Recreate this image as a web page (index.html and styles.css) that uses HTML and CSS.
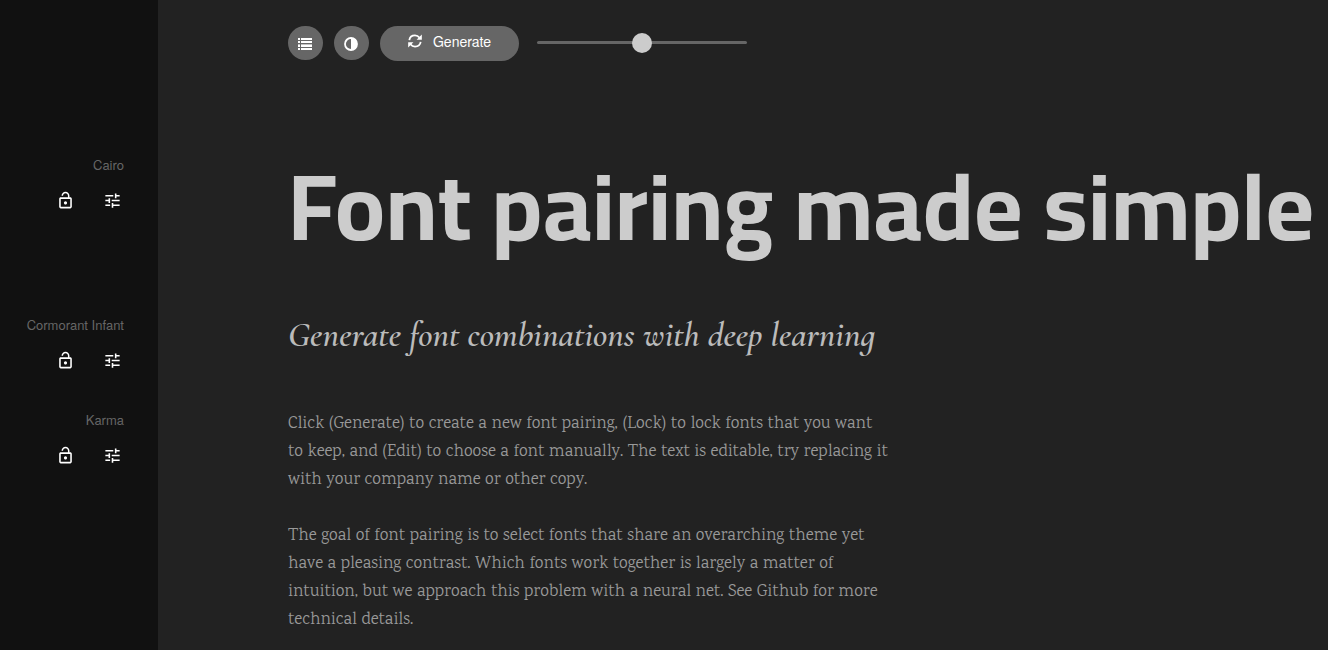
FILE: index.html
```html
<!DOCTYPE html>
<html lang="en">
<head>
<meta charset="utf-8">
<meta name="viewport" content="width=device-width, initial-scale=1">
<title>Font pairing made simple</title>
<link rel="stylesheet" href="styles.css">
</head>
<body>
<svg class="sprite" aria-hidden="true">
  <symbol id="lock" viewBox="0 0 24 24"><path fill="currentColor" d="M12 17c1.100 0 2-.9 2-2s-.9-2-2-2-2 .9-2 2 .9 2 2 2zm6-9h-1V6c0-2.760-2.240-5-5-5S7 3.240 7 6h1.900c0-1.710 1.390-3.100 3.100-3.100s3.100 1.390 3.100 3.100v2H6c-1.100 0-2 .9-2 2v10c0 1.100.9 2 2 2h12c1.100 0 2-.9 2-2V10c0-1.100-.9-2-2-2zm0 12H6V10h12v10z"/></symbol>
  <symbol id="tune" viewBox="0 0 24 24"><path fill="currentColor" d="M3 17v2h6v-2H3zM3 5v2h10V5H3zm10 16v-2h8v-2h-8v-2h-2v6h2zM7 9v2H3v2h4v2h2V9H7zm14 4v-2H11v2h10zm-6-4h2V7h4V5h-4V3h-2v6z"/></symbol>
</svg>
<div class="app">
  <aside class="sidebar">
    <section class="font-control font-control-title">
      <span class="font-name">Cairo</span>
      <div class="font-actions">
        <button type="button" class="icon-button" aria-label="Lock Cairo"><svg class="icon"><use href="#lock"/></svg></button>
        <button type="button" class="icon-button" aria-label="Edit Cairo"><svg class="icon"><use href="#tune"/></svg></button>
      </div>
    </section>
    <section class="font-control font-control-subtitle">
      <span class="font-name">Cormorant Infant</span>
      <div class="font-actions">
        <button type="button" class="icon-button" aria-label="Lock Cormorant Infant"><svg class="icon"><use href="#lock"/></svg></button>
        <button type="button" class="icon-button" aria-label="Edit Cormorant Infant"><svg class="icon"><use href="#tune"/></svg></button>
      </div>
    </section>
    <section class="font-control">
      <span class="font-name">Karma</span>
      <div class="font-actions">
        <button type="button" class="icon-button" aria-label="Lock Karma"><svg class="icon"><use href="#lock"/></svg></button>
        <button type="button" class="icon-button" aria-label="Edit Karma"><svg class="icon"><use href="#tune"/></svg></button>
      </div>
    </section>
  </aside>
  <main class="content">
    <div class="toolbar">
      <button type="button" class="pill round" aria-label="List view">
        <svg class="tool-icon" viewBox="0 0 16 16" shape-rendering="crispEdges"><path fill="#fff" d="M1 2h2v2H1zM4 2h11v2H4zM1 5h2v2H1zM4 5h11v2H4zM1 9h2v2H1zM4 9h11v2H4zM1 12h2v2H1zM4 12h11v2H4z"/><path fill="#fff" opacity=".6" d="M1 8h2v1H1zM4 8h11v1H4z"/></svg>
      </button>
      <button type="button" class="pill round" aria-label="Toggle contrast">
        <svg class="tool-icon" viewBox="0 0 16 16"><circle cx="8" cy="8" r="6" fill="none" stroke="#fff" stroke-width="1.800"/><path fill="#fff" d="M8 2a6 6 0 0 1 0 12z"/></svg>
      </button>
      <button type="button" class="pill generate">
        <svg class="refresh-icon" viewBox="0 0 16 16"><path fill="none" stroke="#fff" stroke-width="2" d="M1.500 7C2 3.800 4.700 1.700 8 1.700c2.200 0 4 1 5.200 2.500M14.500 9c-.5 3.200-3.200 5.300-6.500 5.300-2.200 0-4-1-5.200-2.500"/><path fill="#fff" d="M15.800.5v6h-6zM.2 15.500v-6h6z"/></svg>
        <span>Generate</span>
      </button>
      <input class="slider" type="range" min="0" max="100" value="50" aria-label="Contrast between fonts">
    </div>
    <h1 class="title" contenteditable="true" spellcheck="false">Font pairing made simple</h1>
    <h2 class="subtitle" contenteditable="true" spellcheck="false">Generate font combinations with deep learning</h2>
    <div class="copy" contenteditable="true" spellcheck="false">
      <p>Click (Generate) to create a new font pairing, (Lock) to lock fonts that you want<br>to keep, and (Edit) to choose a font manually. The text is editable, try replacing it with your company name or other copy.</p>
      <p>The goal of font pairing is to select fonts that share an overarching theme yet have a pleasing contrast. Which fonts work together is largely a matter of intuition, but we approach this problem with a neural net. See Github for more technical details.</p>
    </div>
  </main>
</div>
</body>
</html>
```
FILE: styles.css
```css
* { box-sizing: border-box; }
body {
  margin: 0;
  background: #222;
  color: #ccc;
  font-family: "Nimbus Sans", "Nimbus Sans L", "TeX Gyre Heros", Helvetica, "Liberation Sans", Arial, sans-serif;
}
.sprite { display: none; }
.app {
  display: flex;
  min-height: 100vh;
  overflow: hidden;
}
.sidebar {
  flex: 0 0 158px;
  padding: 155px 34px 0 0;
  background: #111;
}
.font-control {
  display: flex;
  flex-direction: column;
  align-items: flex-end;
  gap: 16px;
}
.font-control-title { margin-bottom: 105px; }
.font-control-subtitle { margin-bottom: 40px; }
.font-name {
  font-size: 13px;
  line-height: 20px;
  color: #666;
  white-space: nowrap;
}
.font-actions {
  display: flex;
  gap: 28px;
  padding-right: 2px;
}
.icon-button {
  width: 19px;
  height: 19px;
  padding: 0;
  border: 0;
  background: none;
  color: #fff;
  cursor: pointer;
}
.icon { display: block; width: 19px; height: 19px; }
.content {
  flex: 1;
  min-width: 0;
  padding: 26px 0 20px 130px;
}
.toolbar {
  display: flex;
  align-items: flex-start;
  gap: 11px;
}
.pill {
  display: flex;
  align-items: center;
  justify-content: center;
  height: 35px;
  padding: 0;
  border: 0;
  border-radius: 18px;
  background: #666;
  color: #fff;
  font: inherit;
  font-size: 14px;
  cursor: pointer;
}
.round { width: 35px; height: 34px; padding: 2px 1px 0 0; }
.generate {
  width: 139px;
  padding: 0 0 5px;
  gap: 11px;
}
.tool-icon { width: 16px; height: 16px; }
.refresh-icon { width: 14px; height: 14px; }
.slider {
  appearance: none;
  width: 210px;
  height: 3px;
  margin: 15px 0 0 7px;
  border-radius: 2px;
  background: #666;
}
.slider::-webkit-slider-thumb {
  appearance: none;
  width: 20px;
  height: 20px;
  border-radius: 50%;
  background: #ccc;
}
.title {
  margin: 82px 0 0;
  font: 700 94px/126px "Cairo", "Noto Sans", sans-serif;
  white-space: nowrap;
}
.subtitle {
  margin: 43px 0 0;
  font: italic 600 35px/46px "Cormorant Infant", "Liberation Serif", serif;
  color: #bbb;
}
.copy {
  max-width: 610px;
  margin-top: 53px;
  font: 400 17px/28px "Karma", "Liberation Serif", serif;
  color: #999;
}
.copy p { margin: 0 0 28px; }
```
